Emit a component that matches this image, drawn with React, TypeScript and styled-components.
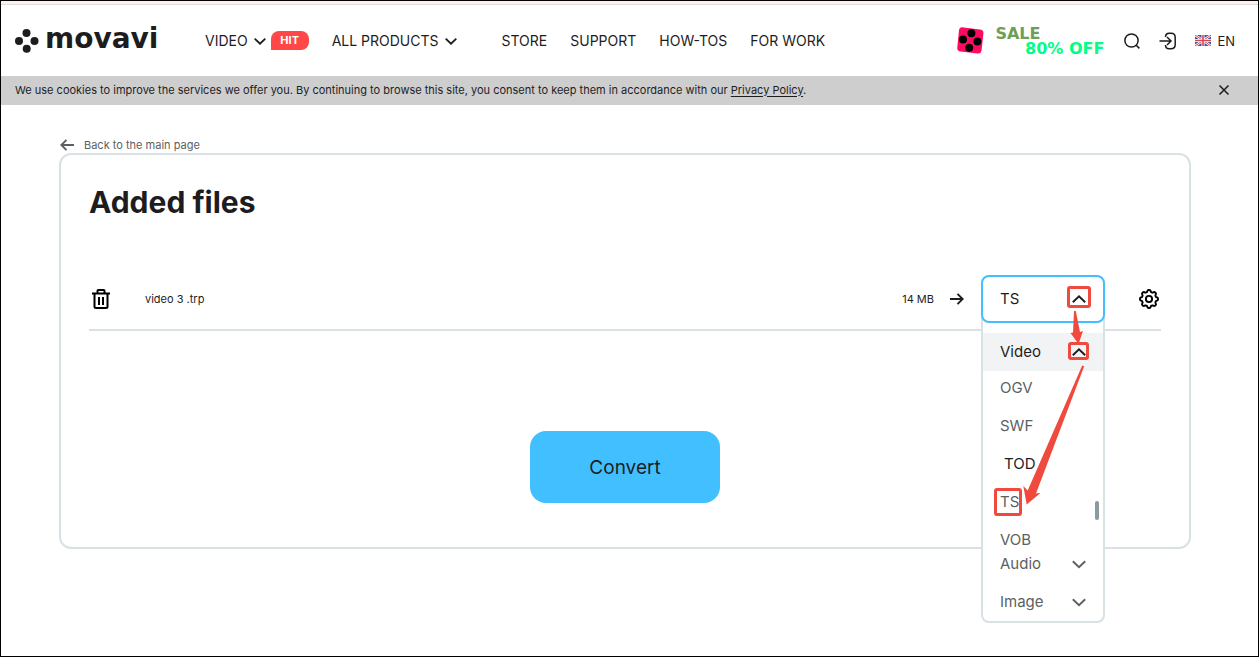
import React from "react";
import styled, { createGlobalStyle } from "styled-components";

const ink = "#1d1d1f";
const muted = "#5c5f62";
const line = "#d8e2e5";
const accent = "#42bfff";
const marker = "#f04a3e";

const GlobalStyle = createGlobalStyle`
  *, *::before, *::after { box-sizing: border-box; }
  html, body, #root { min-height: 100vh; }
  body {
    margin: 0;
    background: #fff;
    color: ${ink};
    font-family: Inter, "Liberation Sans", sans-serif;
  }
  button {
    margin: 0;
    padding: 0;
    border: 0;
    background: none;
    color: inherit;
    font: inherit;
    cursor: pointer;
  }
  a { color: inherit; text-decoration: none; }
  svg { display: block; flex: none; }
`;

const Page = styled.div`
  min-height: 100vh;
  border: 1px solid #000;
`;

const PromoStrip = styled.div`
  height: 4px;
  background: #fff0f0;
  border-bottom: 1px solid #e6dcd8;
`;

const Header = styled.header`
  display: flex;
  align-items: center;
  height: 71px;
  padding: 0 23px 0 14px;
`;

const Logo = styled.a`
  display: flex;
  align-items: center;
  gap: 6px;
  width: 144px;
  font: 700 28px/28px "DejaVu Sans", sans-serif;
`;

const LogoText = styled.span`
  padding-bottom: 4px;
`;

const Nav = styled.nav`
  display: flex;
  align-items: center;
  flex: 1;
  gap: 23px;
  margin-left: 46px;
  font-size: 14px;
  line-height: 20px;
  white-space: nowrap;
`;

const NavGroup = styled.div<{ $wide?: boolean }>`
  display: flex;
  align-items: center;
  gap: 5px;
  margin-right: ${(p) => (p.$wide ? "22px" : "0")};
`;

const NavButton = styled.button`
  display: flex;
  align-items: center;
  gap: 6px;
`;

const HitBadge = styled.span`
  width: 38px;
  border-radius: 8px 8px 8px 0;
  background: #ff4747;
  color: #fff;
  font-size: 11px;
  font-weight: 700;
  line-height: 19px;
  text-align: center;
`;

const Sale = styled.a`
  display: flex;
  align-items: center;
  gap: 11px;
  width: 147px;
`;

const SaleText = styled.span`
  display: flex;
  flex: 1;
  flex-direction: column;
  font: 700 16px/15px "DejaVu Sans", sans-serif;
  color: #6f9e56;
  white-space: nowrap;
`;

const SaleAmount = styled.span`
  align-self: flex-end;
  color: #00ff85;
`;

const Tools = styled.div`
  display: flex;
  align-items: center;
  gap: 18px;
  margin-left: 19px;
  font-size: 13px;
  line-height: 20px;
`;

const Language = styled.button`
  display: flex;
  align-items: center;
  gap: 6px;
`;

const CookieBar = styled.div`
  display: flex;
  align-items: center;
  justify-content: space-between;
  min-height: 29px;
  padding: 0 28px 2px 14px;
  background: #cecece;
  font-size: 11px;
  line-height: 16px;
`;

const PolicyLink = styled.a`
  text-decoration: underline;
  text-underline-offset: 2px;
`;

const Main = styled.main`
  padding: 32px 67px 0 58px;
`;

const BackLink = styled.a`
  display: flex;
  align-items: center;
  gap: 10px;
  width: fit-content;
  margin-left: 1px;
  color: ${muted};
  font-size: 11px;
  line-height: 16px;
`;

const Card = styled.section`
  display: flex;
  flex-direction: column;
  padding: 28px 28px 44px;
  border: 2px solid ${line};
  border-radius: 12px;
`;

const Title = styled.h1`
  margin: 0 0 48px;
  font-size: 30px;
  line-height: 38px;
`;

const FileRow = styled.div`
  display: flex;
  align-items: center;
  height: 62px;
  margin-bottom: 100px;
  padding: 0 2px;
  border-bottom: 2px solid ${line};
  font-size: 11px;
  line-height: 16px;
`;

const FileName = styled.span`
  flex: 1;
  margin-left: 34px;
`;

const SizeLabel = styled.span`
  margin-right: 16px;
`;

const Picker = styled.div`
  position: relative;
  width: 124px;
  margin: 0 34px 0 17px;
  font-size: 15px;
  line-height: 20px;
`;

const PickerButton = styled.button`
  position: relative;
  z-index: 2;
  display: flex;
  align-items: center;
  justify-content: space-between;
  width: 100%;
  height: 48px;
  padding: 0 17px;
  border: 2px solid ${accent};
  border-radius: 8px;
  background: #fff;
`;

const Menu = styled.div`
  position: absolute;
  z-index: 1;
  top: 40px;
  left: 0;
  width: 100%;
  padding-top: 18px;
  border: 2px solid ${line};
  border-top: 0;
  border-radius: 0 0 8px 8px;
  background: #fff;
`;

const GroupButton = styled.button<{ $open?: boolean }>`
  display: flex;
  align-items: center;
  justify-content: space-between;
  width: 100%;
  height: 38px;
  padding: 0 17px;
  background: ${(p) => (p.$open ? "#f2f3f5" : "transparent")};
  color: ${(p) => (p.$open ? ink : muted)};
`;

const FormatList = styled.div`
  position: relative;
  display: flex;
  flex-direction: column;
  gap: 22px;
  margin-bottom: -3px;
  padding-top: 9px;
`;

const Format = styled.button<{ $active?: boolean }>`
  padding-left: ${(p) => (p.$active ? "21px" : "17px")};
  color: ${(p) => (p.$active ? ink : muted)};
  line-height: 16px;
  text-align: left;
`;

const ScrollThumb = styled.span`
  position: absolute;
  top: 130px;
  right: 4px;
  width: 4px;
  height: 19px;
  border-radius: 2px;
  background: #8b99a1;
`;

const Markup = styled.svg`
  position: absolute;
  z-index: 3;
  top: 0;
  left: 0;
  overflow: visible;
  pointer-events: none;
`;

const ConvertButton = styled.button`
  align-self: center;
  width: 190px;
  height: 72px;
  border-radius: 16px;
  background: ${accent};
  font-size: 19px;
`;

function Chevron({ size = 14, up = false }: { size?: number; up?: boolean }) {
  return (
    <svg width={size} height={size} viewBox="0 0 14 14" fill="none" stroke="currentColor" strokeWidth={size > 12 ? 1.9 : 2.1} aria-hidden="true">
      <path d={up ? "M.8 10.2 7 4.2l6.2 6" : "M.8 4.2 7 10.2l6.2-6"} />
    </svg>
  );
}

function LogoMark() {
  return (
    <svg width="24" height="24" viewBox="0 0 24 24" fill={ink} aria-hidden="true">
      <circle cx="11.5" cy="4" r="4" />
      <circle cx="4" cy="12" r="4" />
      <circle cx="19.5" cy="12" r="4" />
      <circle cx="11.7" cy="19.8" r="4" />
    </svg>
  );
}

function Die() {
  return (
    <svg width="27" height="27" viewBox="0 0 27 27" aria-hidden="true">
      <path d="M5 .3 22.7 2.6Q26.7 3 26.4 6.5L24.6 23Q24 27 20.5 26.5L3.5 24.5Q-.1 24 .3 20.5L2 3Q2.5 0 5 .3Z" fill="#ff0a63" />
      <circle cx="14.4" cy="6.3" r="4" />
      <circle cx="6" cy="12.4" r="4" />
      <circle cx="20.4" cy="14.4" r="4" />
      <circle cx="12.2" cy="20.7" r="4" />
    </svg>
  );
}

function SearchIcon() {
  return (
    <svg width="18" height="18" viewBox="0 0 18 18" fill="none" stroke={ink} strokeWidth="1.5" aria-hidden="true">
      <circle cx="8.5" cy="8.5" r="6.6" />
      <path d="m13.2 13.2 3.2 3.2" />
    </svg>
  );
}

function SignInIcon() {
  return (
    <svg width="18" height="18" viewBox="0 0 18 18" fill="none" stroke={ink} strokeWidth="1.5" aria-hidden="true">
      <path d="M.5 9h11.2M8 5l4 4-4 4M6.5 5V4.5q.3-3.2 3.5-3.2h2q4.2 0 4.2 4.2v7q0 4.2-4.2 4.2h-2q-3.2 0-3.5-3.2V13" />
    </svg>
  );
}

function Flag() {
  return (
    <svg width="16" height="11" viewBox="0 0 16 11" aria-hidden="true">
      <path fill="#3f549b" d="M0 0h16v11H0z" />
      <path stroke="#fff" strokeWidth="2.4" d="m0 0 16 11M16 0 0 11" />
      <path stroke="#dc4350" strokeWidth="1" d="m0 0 16 11M16 0 0 11" />
      <path stroke="#fff" strokeWidth="3" d="M8 0v11M0 5.5h16" />
      <path stroke="#dc4350" strokeWidth="1.6" d="M8 0v11M0 5.5h16" />
    </svg>
  );
}

function CloseIcon() {
  return (
    <svg width="12" height="12" viewBox="0 0 12 12" stroke={ink} strokeWidth="1.5" aria-hidden="true">
      <path d="m1.5 1.5 9 9m0-9-9 9" />
    </svg>
  );
}

function Arrow({ back = false }: { back?: boolean }) {
  return (
    <svg width="14" height="14" viewBox="0 0 14 14" fill="none" stroke="currentColor" strokeWidth="1.9" aria-hidden="true">
      <path d={back ? "M14 7H1.5M6.5 1.8 1.3 7l5.2 5.2" : "M0 7h12.5M7.5 1.8 12.7 7l-5.2 5.2"} />
    </svg>
  );
}

function TrashIcon() {
  return (
    <svg width="20" height="22" viewBox="0 0 20 22" fill="none" stroke="#000" strokeWidth="2" aria-hidden="true">
      <path d="M1 5.5h18M6.5 5V2.8Q6.5 2 7.3 2h5.4q.8 0 .8.8V5M3.5 5.5v13q0 1.5 1.5 1.5h10q1.5 0 1.5-1.5v-13M8 9v8M12 9v8" />
    </svg>
  );
}

const gearPath = (() => {
  const points: string[] = [];
  for (let i = 0; i < 96; i++) {
    const a = (i / 96) * Math.PI * 2;
    const r = 8.1 + 0.95 * Math.tanh(2 * Math.cos(8 * a));
    points.push(`${(10 + r * Math.cos(a)).toFixed(2)} ${(10 + r * Math.sin(a)).toFixed(2)}`);
  }
  return `M${points.join("L")}Z`;
})();

function GearIcon() {
  return (
    <svg width="20" height="20" viewBox="0 0 20 20" fill="none" stroke="#000" strokeWidth="1.9" strokeLinejoin="round" aria-hidden="true">
      <path d={gearPath} />
      <circle cx="10" cy="10" r="3.1" />
    </svg>
  );
}

const formats = ["OGV", "SWF", "TOD", "TS", "VOB"];

function FormatPicker() {
  return (
    <Picker>
      <PickerButton type="button" aria-haspopup="true" aria-expanded="true" aria-label="Output format: TS">
        TS
        <Chevron up />
      </PickerButton>
      <Menu>
        <GroupButton type="button" $open aria-expanded="true">
          Video
          <Chevron up />
        </GroupButton>
        <FormatList>
          {formats.map((name) => (
            <Format key={name} type="button" $active={name === "TOD"}>
              {name}
            </Format>
          ))}
          <ScrollThumb />
        </FormatList>
        {["Audio", "Image"].map((name) => (
          <GroupButton key={name} type="button" aria-expanded="false">
            {name}
            <Chevron />
          </GroupButton>
        ))}
      </Menu>
      <Markup width="124" height="250" viewBox="0 0 124 250" aria-hidden="true">
        <g fill="none" stroke={marker} strokeWidth="3">
          <rect x="87.5" y="12.5" width="21" height="19" rx="1.5" />
          <rect x="88.5" y="68.5" width="18" height="15" rx="1.5" />
          <rect x="14.5" y="214.5" width="25" height="25" rx="1.5" />
        </g>
        <g fill={marker}>
          <path d="M93 36h1.8L99 57l3-1-4.5 13-8-11 2.5-.5Z" />
          <path d="M101.2 90.5 103.2 91.3 55 218.500 59.500 218 45.700 229.500 42.300 211 46.700 215.500Z" />
        </g>
      </Markup>
    </Picker>
  );
}

export default function App() {
  return (
    <Page>
      <GlobalStyle />
      <PromoStrip />
      <Header>
        <Logo href="#home">
          <LogoMark />
          <LogoText>movavi</LogoText>
        </Logo>
        <Nav>
          <NavGroup>
            <NavButton type="button">
              VIDEO
              <Chevron size={12} />
            </NavButton>
            <HitBadge>HIT</HitBadge>
          </NavGroup>
          <NavGroup $wide>
            <NavButton type="button">
              ALL PRODUCTS
              <Chevron size={12} />
            </NavButton>
          </NavGroup>
          <a href="#store">STORE</a>
          <a href="#support">SUPPORT</a>
          <a href="#how-tos">HOW-TOS</a>
          <a href="#work">FOR WORK</a>
        </Nav>
        <Sale href="#sale">
          <Die />
          <SaleText>
            SALE
            <SaleAmount>80% OFF</SaleAmount>
          </SaleText>
        </Sale>
        <Tools>
          <button type="button" aria-label="Search">
            <SearchIcon />
          </button>
          <button type="button" aria-label="Sign in">
            <SignInIcon />
          </button>
          <Language type="button">
            <Flag />
            EN
          </Language>
        </Tools>
      </Header>
      <CookieBar>
        <span>
          We use cookies to improve the services we offer you. By continuing to browse this site, you consent to keep
          them in accordance with our <PolicyLink href="#privacy">Privacy Policy</PolicyLink>.
        </span>
        <button type="button" aria-label="Close">
          <CloseIcon />
        </button>
      </CookieBar>
      <Main>
        <BackLink href="#main">
          <Arrow back />
          Back to the main page
        </BackLink>
        <Card>
          <Title>Added files</Title>
          <FileRow>
            <button type="button" aria-label="Delete file">
              <TrashIcon />
            </button>
            <FileName>video 3 .trp</FileName>
            <SizeLabel>14 MB</SizeLabel>
            <Arrow />
            <FormatPicker />
            <button type="button" aria-label="Settings">
              <GearIcon />
            </button>
          </FileRow>
          <ConvertButton type="button">Convert</ConvertButton>
        </Card>
      </Main>
    </Page>
  );
}
